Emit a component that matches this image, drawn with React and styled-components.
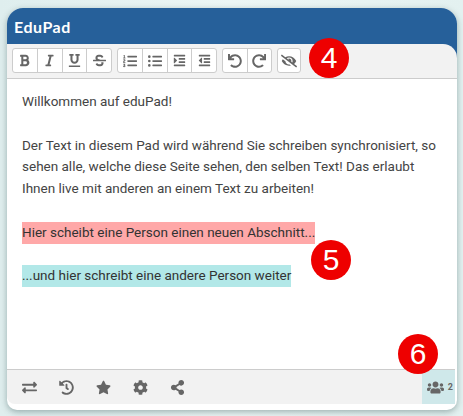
import React from 'react';
import styled, {createGlobalStyle} from 'styled-components';
import {
  FaBold, FaItalic, FaUnderline, FaStrikethrough, FaListOl, FaListUl, FaIndent, FaOutdent,
  FaUndo, FaRedo, FaEyeSlash, FaExchangeAlt, FaHistory, FaStar, FaCog, FaShareAlt, FaUsers
} from 'react-icons/fa';

const GlobalStyle = createGlobalStyle`
  html, body {
    margin: 0;
    padding: 0;
  }
  body {
    width: 463px;
    height: 416px;
    overflow: hidden;
    background: linear-gradient(90deg, #dfeeee 0%, #ecf6f5 50%, #e3f1f0 100%);
    font-family: Roboto, sans-serif;
  }
`;

const Page = styled.div`
  position: relative;
  width: 463px;
  height: 416px;
  padding: 8px 6px 6px 7px;
  box-sizing: border-box;
`;

const Card = styled.div`
  height: 402px;
  display: flex;
  flex-direction: column;
  background: #fff;
  border-radius: 16px 16px 10px 10px;
  overflow: hidden;
  box-shadow: 0 2px 6px rgba(60, 90, 90, 0.45);
`;

const Header = styled.div`
  height: 36px;
  flex: none;
  background: #26609a;
  color: #fff;
  display: flex;
  align-items: center;
  padding-left: 7px;
  font-family: Lato, sans-serif;
  font-weight: 700;
  font-size: 16px;
  letter-spacing: 0.5px;
`;

const ToolbarBack = styled.div`
  flex: none;
  background: #26609a;
`;

const Toolbar = styled.div`
  height: 35px;
  box-sizing: border-box;
  background: #f2f2f2;
  border-bottom: 1px solid #ccc;
  border-radius: 0 14px 0 0;
  display: flex;
  align-items: center;
  gap: 5px;
  padding: 0 5px 1px;
`;

const Group = styled.div`
  display: flex;
  width: ${(props) => props.width}px;
  height: 25px;
  box-sizing: border-box;
  background: #fff;
  border: 1px solid #ccc;
  border-radius: 3px;
`;

const ToolButton = styled.div`
  flex: 1;
  display: flex;
  align-items: center;
  justify-content: center;
  color: #666;
  font-size: 13px;
  & + & {
    border-left: 1px solid #ccc;
  }
`;

const Body = styled.div`
  flex: 1;
  padding: 12px 15px 0;
  font-size: 13.5px;
  line-height: 21.75px;
  color: #444;
`;

const Line = styled.div`
  min-height: 21.75px;
`;

const Mark = styled.span`
  background: ${(props) => props.color};
  color: #333;
  display: inline-block;
  height: 22px;
`;

const Footer = styled.div`
  height: 35px;
  flex: none;
  box-sizing: border-box;
  background: #f2f2f2;
  border-top: 1px solid #ccc;
  display: flex;
  align-items: stretch;
  justify-content: space-between;
  margin-bottom: 6px;
  margin-right: 2px;
  border-radius: 0 0 0 8px;
`;

const FooterIcons = styled.div`
  display: flex;
  align-items: center;
  gap: 22px;
  padding-left: 15px;
  color: #666;
  font-size: 15px;
`;

const Users = styled.div`
  width: 33px;
  background: #cfe8ea;
  display: flex;
  align-items: center;
  justify-content: flex-end;
  gap: 4px;
  padding-right: 2px;
  box-sizing: border-box;
  color: #666;
  font-size: 9px;
  font-weight: 700;
  svg {
    font-size: 17px;
  }
`;

const Badge = styled.div`
  position: absolute;
  left: ${(props) => props.x}px;
  top: ${(props) => props.y}px;
  width: 40px;
  height: 40px;
  border-radius: 50%;
  background: #ee0000;
  color: #fff;
  font-family: "Liberation Sans", sans-serif;
  font-size: 30px;
  display: flex;
  align-items: center;
  justify-content: center;
`;

export default function App() {
  return (
    <Page>
      <GlobalStyle />
      <Card>
        <Header>EduPad</Header>
        <ToolbarBack>
          <Toolbar>
            <Group width={100}>
              <ToolButton><FaBold /></ToolButton>
              <ToolButton><FaItalic /></ToolButton>
              <ToolButton><FaUnderline /></ToolButton>
              <ToolButton><FaStrikethrough /></ToolButton>
            </Group>
            <Group width={100}>
              <ToolButton><FaListOl size={14} /></ToolButton>
              <ToolButton><FaListUl size={14} /></ToolButton>
              <ToolButton><FaIndent /></ToolButton>
              <ToolButton><FaOutdent /></ToolButton>
            </Group>
            <Group width={50}>
              <ToolButton><FaUndo size={14} /></ToolButton>
              <ToolButton><FaRedo size={14} /></ToolButton>
            </Group>
            <Group width={24}>
              <ToolButton><FaEyeSlash size={16} /></ToolButton>
            </Group>
          </Toolbar>
        </ToolbarBack>
        <Body>
          <Line>Willkommen auf eduPad!</Line>
          <Line />
          <Line>Der Text in diesem Pad wird während Sie schreiben synchronisiert, so</Line>
          <Line>sehen alle, welche diese Seite sehen, den selben Text! Das erlaubt</Line>
          <Line>Ihnen live mit anderen an einem Text zu arbeiten!</Line>
          <Line />
          <Line><Mark color="#ffa8a8">Hier scheibt eine Person einen neuen Abschnitt...</Mark></Line>
          <Line />
          <Line><Mark color="#b2e8e8">...und hier schreibt eine andere Person weiter</Mark></Line>
        </Body>
        <Footer>
          <FooterIcons>
            <FaExchangeAlt />
            <FaHistory />
            <FaStar />
            <FaCog />
            <FaShareAlt />
          </FooterIcons>
          <Users><FaUsers />2</Users>
        </Footer>
      </Card>
      <Badge x={309} y={38}>4</Badge>
      <Badge x={311} y={240}>5</Badge>
      <Badge x={398} y={334}>6</Badge>
    </Page>
  );
}
